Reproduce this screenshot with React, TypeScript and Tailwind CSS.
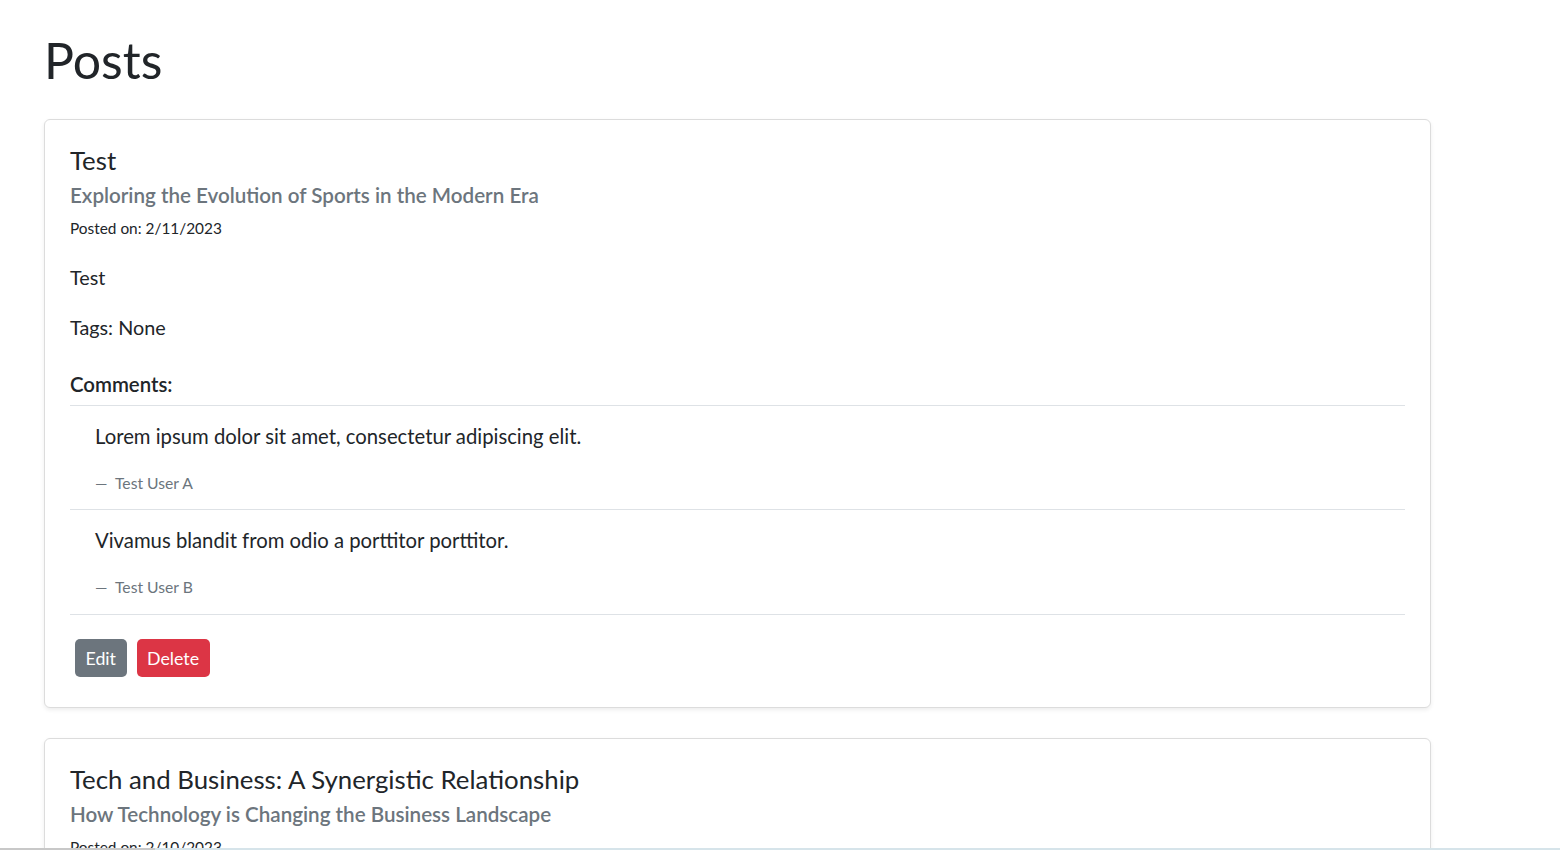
import React from "react";

type CommentType = {
	text: string;
	author: string;
};

type PostType = {
	id: number;
	title: string;
	subtitle: string;
	date: string;
	body: string;
	tags: string[];
	comments: CommentType[];
};

const posts: PostType[] = [
	{
		id: 1,
		title: "Test",
		subtitle: "Exploring the Evolution of Sports in the Modern Era",
		date: "2/11/2023",
		body: "Test",
		tags: [],
		comments: [
			{ text: "Lorem ipsum dolor sit amet, consectetur adipiscing elit.", author: "Test User A" },
			{ text: "Vivamus blandit from odio a porttitor porttitor.", author: "Test User B" },
		],
	},
	{
		id: 2,
		title: "Tech and Business: A Synergistic Relationship",
		subtitle: "How Technology is Changing the Business Landscape",
		date: "2/10/2023",
		body: "Technology keeps reshaping how companies work, sell and grow.",
		tags: ["tech", "business"],
		comments: [{ text: "Great read, thanks for sharing.", author: "Test User C" }],
	},
];

const PostCard = ({ post }: { post: PostType }) => {
	return (
		<div className="w-[1387px] rounded-[6px] border border-[#dcdcdc] bg-white px-[25px] pt-[24px] pb-[25px] shadow-[0_2px_4px_rgba(0,0,0,0.075)]">
			<h4 className="text-[25.8px] leading-[32px] font-normal text-[#212529]">{post.title}</h4>
			<h5 className="mt-[6px] text-[20.6px] leading-[26px] font-semibold text-[#6c757d]">{post.subtitle}</h5>
			<p className="mt-[9px] text-[15.4px] leading-[22px] text-[#212529]">Posted on: {post.date}</p>

			<p className="mt-[25px] text-[19.8px] leading-[26px] text-[#212529]">{post.body}</p>
			<p className="mt-[24px] text-[19.8px] leading-[26px] text-[#212529]">
				Tags: {post.tags.length ? post.tags.join(", ") : "None"}
			</p>

			<h6 className="mt-[31px] text-[20.4px] leading-[26px] font-semibold text-[#212529]">Comments:</h6>
			<ul className="mt-[8px] border-b border-[#dee2e6]">
				{post.comments.map((comment, i) => (
					<li key={i} className="border-t border-[#dee2e6] pl-[25px] pt-[16px] pb-[15px] last:pb-[16px]">
						<p className="text-[20.3px] leading-[28px] text-[#212529]">{comment.text}</p>
						<p className="mt-[22px] text-[15.7px] leading-[22px] text-[#6c757d]">—&nbsp;&nbsp;{comment.author}</p>
					</li>
				))}
			</ul>

			<div className="mt-[19px] flex gap-[10px] p-[5px]">
				<button className="h-[38px] rounded-[5px] bg-[#6c757d] px-[10.5px] text-[17.8px] text-white">Edit</button>
				<button className="h-[38px] rounded-[5px] bg-[#dc3545] px-[10.5px] text-[17.8px] text-white">Delete</button>
			</div>
		</div>
	);
};

const App = () => {
	return (
		<div className="min-h-screen bg-white pl-[44px] pt-[29px] pb-10 font-['Lato','Noto_Sans',sans-serif] text-[#212529]">
			<h1 className="text-[50px] leading-[62px] font-normal">Posts</h1>

			<div className="mt-[28px] flex flex-col gap-[30px]">
				{posts.map((post) => (
					<PostCard key={post.id} post={post} />
				))}
			</div>

			<div className="fixed bottom-0 left-0 flex h-[2px] w-full">
				<div className="w-[155px] bg-[#c8c8c8]"></div>
				<div className="flex-1 bg-[#d6e4ea]"></div>
			</div>
		</div>
	);
};

export default App;
